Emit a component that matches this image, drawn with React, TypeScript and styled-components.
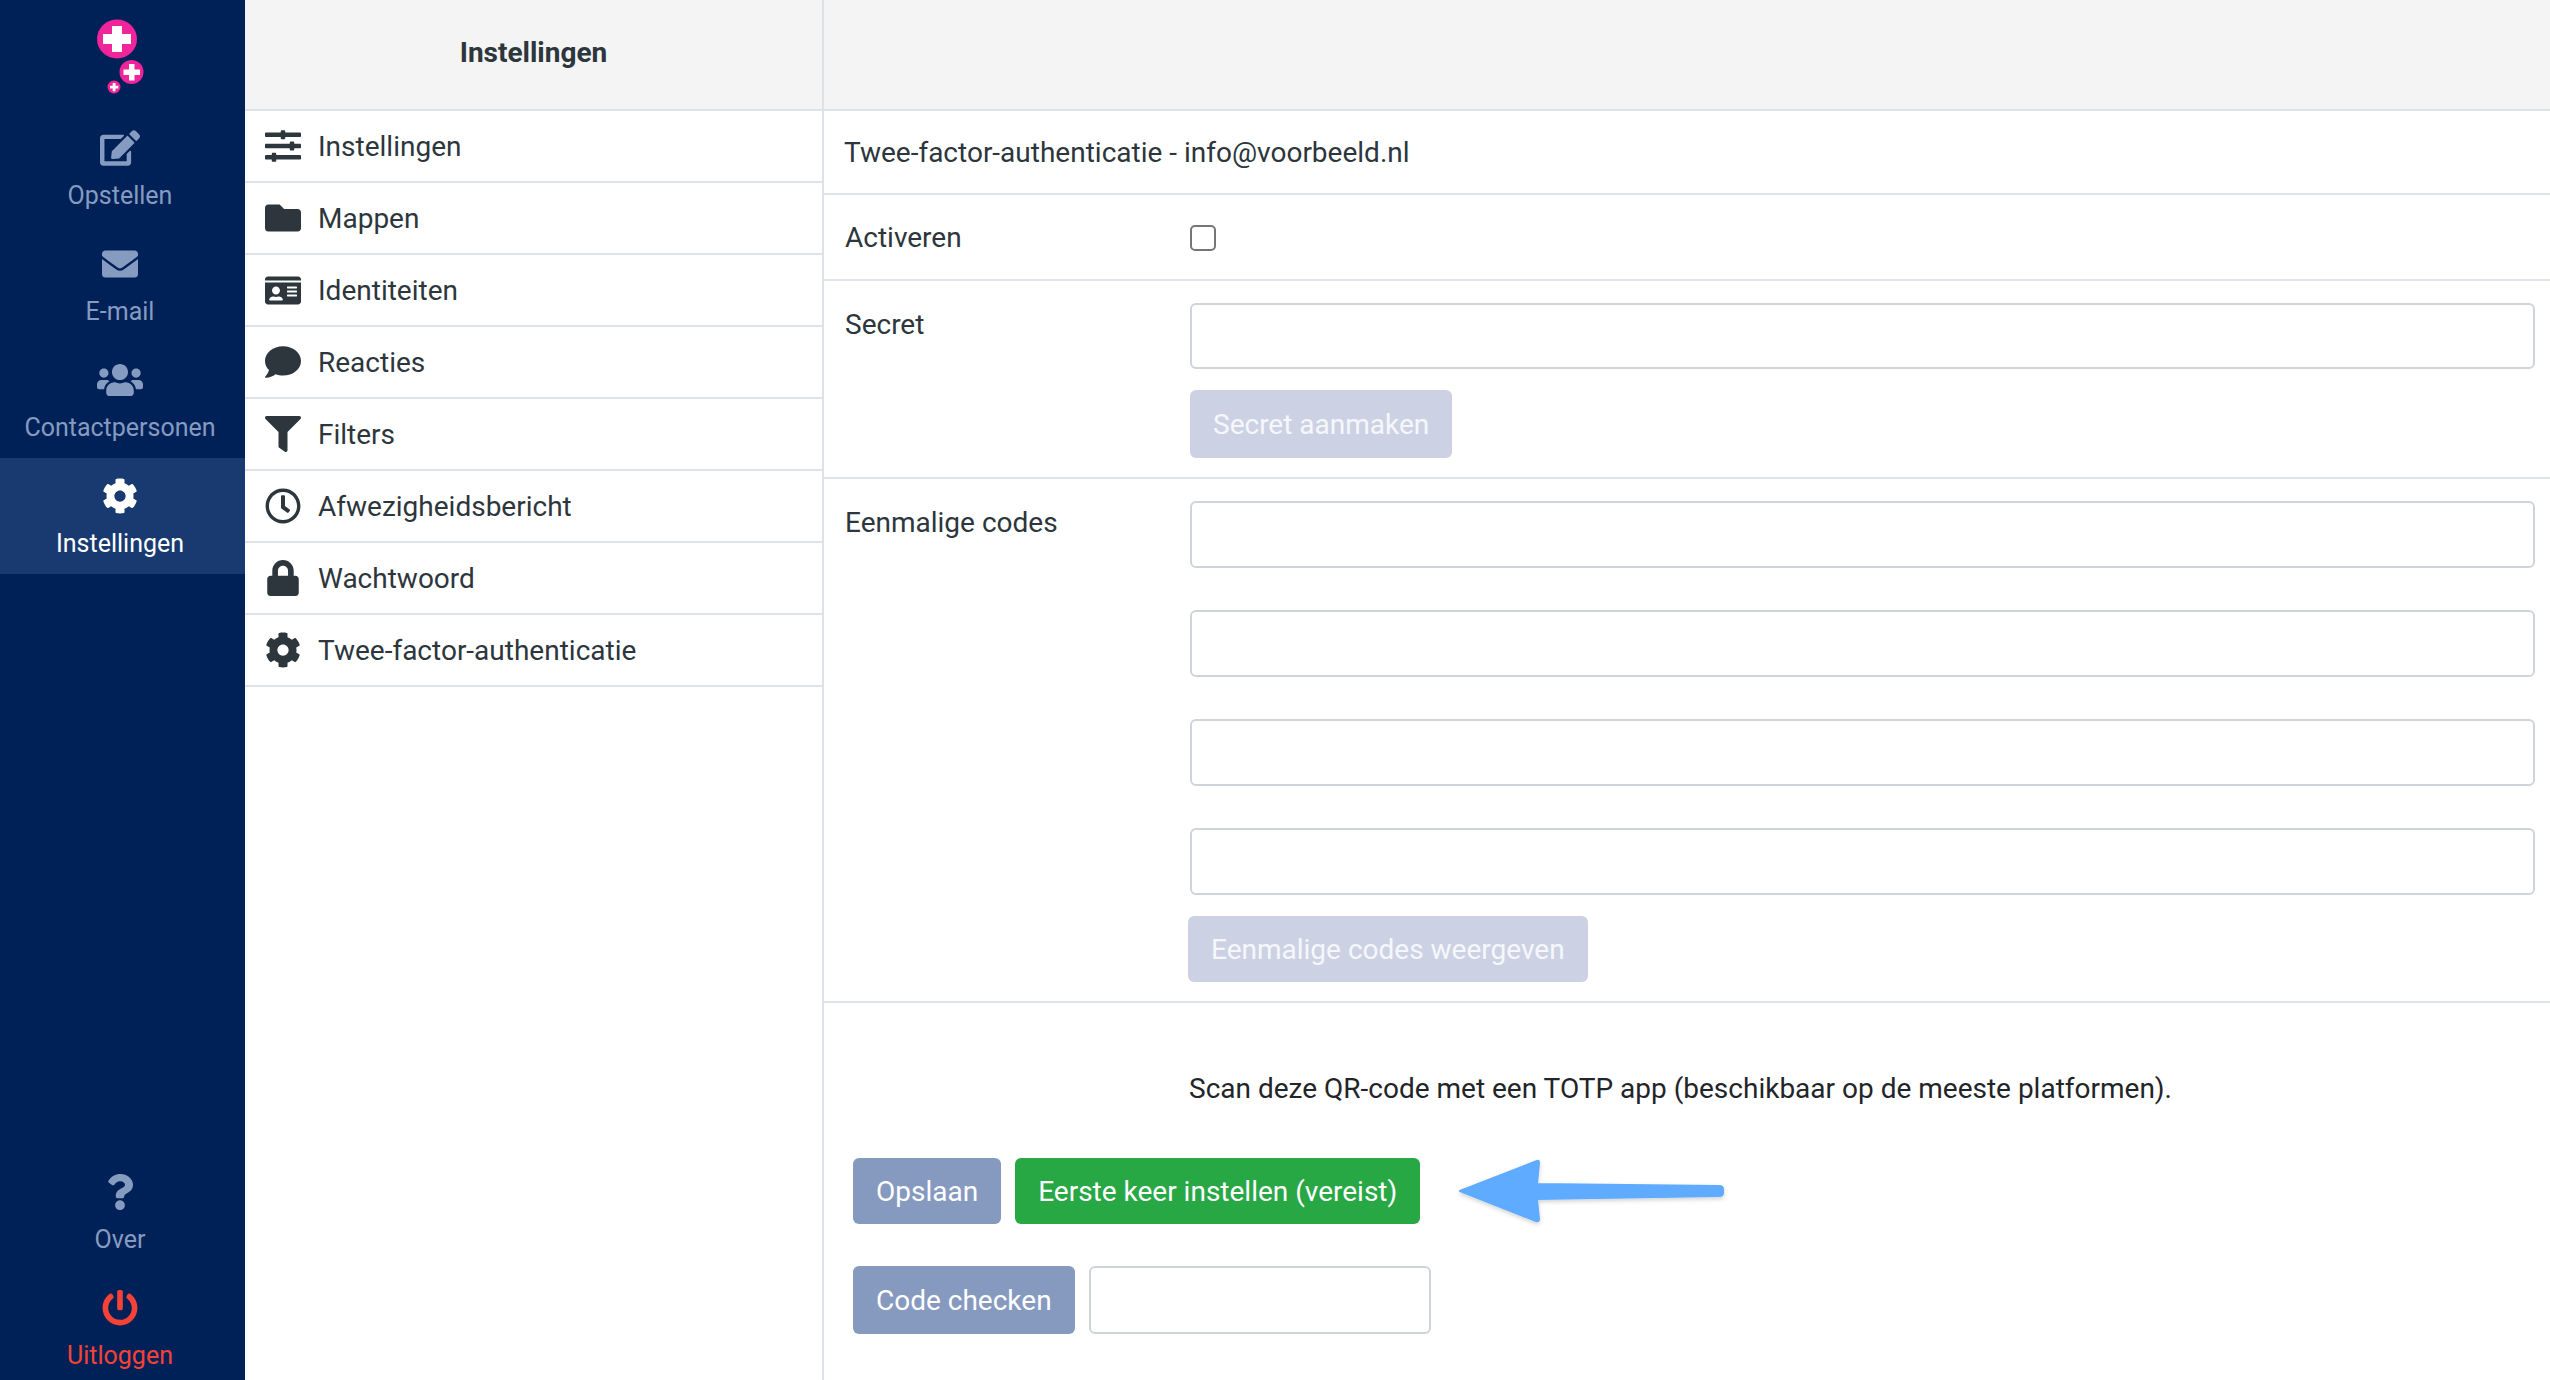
import React from "react";
import styled, { createGlobalStyle } from "styled-components";
import {
  FaCog,
  FaComment,
  FaEdit,
  FaEnvelope,
  FaFilter,
  FaFolder,
  FaIdCard,
  FaLock,
  FaPowerOff,
  FaQuestion,
  FaRegClock,
  FaSlidersH,
  FaUsers,
} from "react-icons/fa";

const GlobalStyle = createGlobalStyle`
  * {
    box-sizing: border-box;
  }
  html, body {
    margin: 0;
    padding: 0;
    background: #fff;
    font-family: Roboto, "Liberation Sans", sans-serif;
    font-size: 26px;
    color: #2c363c;
  }
`;

const Page = styled.div`
  display: grid;
  grid-template-columns: 245px 579px 1fr;
  height: 1380px;
  overflow: hidden;
`;

const Sidebar = styled.nav`
  display: flex;
  flex-direction: column;
  background: #002157;
`;

const LogoWrap = styled.div`
  height: 110px;
  padding: 19px 0 0 97px;
`;

const NavItem = styled.div<{ $active?: boolean; $danger?: boolean }>`
  height: 116px;
  display: flex;
  flex-direction: column;
  align-items: center;
  padding: 20px 5px 0 0;
  font-size: 25px;
  line-height: 38px;
  background: ${(p) => (p.$active ? "#193a70" : "transparent")};
  color: ${(p) => (p.$active ? "#fff" : p.$danger ? "#f44336" : "#869bc0")};
`;

const NavIcon = styled.div<{ $size?: number }>`
  height: 36px;
  margin-bottom: 11px;
  font-size: ${(p) => p.$size || 36}px;
  line-height: 36px;
  display: flex;
  align-items: center;
  justify-content: center;
`;

const BottomNav = styled.div`
  margin-top: auto;

  ${NavItem} {
    padding-top: 26px;
  }
`;

const SubPanel = styled.aside`
  display: flex;
  flex-direction: column;
  border-right: 2px solid #dde2e6;
`;

const PanelHeader = styled.div`
  height: 111px;
  flex: none;
  background: #f4f4f4;
  border-bottom: 2px solid #dde2e6;
  display: flex;
  align-items: center;
  justify-content: center;
  padding-bottom: 4px;
  font-size: 28px;
  font-weight: 700;
`;

const MenuRow = styled.div`
  height: 72px;
  display: flex;
  align-items: center;
  padding-left: 20px;
  border-bottom: 2px solid #dfe3e7;
  font-size: 28px;
`;

const MenuIcon = styled.div<{ $size?: number }>`
  width: 36px;
  margin-right: 17px;
  display: flex;
  justify-content: center;
  font-size: ${(p) => p.$size || 36}px;
`;

const Main = styled.main`
  display: flex;
  flex-direction: column;
`;

const TitleRow = styled.div`
  height: 84px;
  display: flex;
  align-items: center;
  padding-left: 20px;
  border-bottom: 2px solid #dfe3e7;
  font-size: 28px;
`;

const CheckRow = styled.div`
  display: grid;
  grid-template-columns: 345px 1fr;
  height: 86px;
  align-items: center;
  padding: 2px 15px 0 21px;
  border-bottom: 2px solid #dfe3e7;
  font-size: 28px;
`;

const FormRow = styled.div`
  display: grid;
  grid-template-columns: 345px 1fr;
  padding: 22px 15px 19px 21px;
  align-items: start;
  border-bottom: 2px solid #dfe3e7;
  font-size: 28px;
`;

const Label = styled.div`
  line-height: 44px;
`;

const Fields = styled.div<{ $gap: number }>`
  display: flex;
  flex-direction: column;
  align-items: flex-start;
  gap: ${(p) => p.$gap}px;
`;

const TextInput = styled.input<{ $width?: number; $height?: number }>`
  display: block;
  width: ${(p) => (p.$width ? `${p.$width}px` : "100%")};
  height: ${(p) => p.$height || 67}px;
  padding: 0 20px;
  border: 2px solid #ced4da;
  border-radius: 6px;
  background: #fff;
  font: inherit;
`;

const CheckBox = styled.input`
  appearance: none;
  display: block;
  width: 26px;
  height: 26px;
  margin: 0;
  background: #fff;
  border: 2px solid #767676;
  border-radius: 5px;
`;

const Button = styled.button<{ $kind: "primary" | "success" | "disabled"; $height?: number }>`
  height: ${(p) => p.$height || 66}px;
  padding: 0 23px;
  border: 0;
  border-radius: 6px;
  font: inherit;
  font-size: 28px;
  color: ${(p) => (p.$kind === "disabled" ? "#f6f7fb" : "#fff")};
  background: ${(p) =>
    p.$kind === "success" ? "#28a745" : p.$kind === "disabled" ? "#ccd2e4" : "#869abf"};
  white-space: nowrap;
`;

const CodesButton = styled(Button)`
  margin: -21px 0 0 -2px;
`;

const Footer = styled.div`
  display: flex;
  flex-direction: column;
  padding: 64px 0 0 29px;
  font-size: 28px;
`;

const ScanText = styled.div`
  line-height: 44px;
  margin: 0 0 47px 336px;
  color: #1f2529;
`;

const ActionRow = styled.div<{ $mb?: number }>`
  display: flex;
  align-items: center;
  gap: 14px;
  margin-bottom: ${(p) => p.$mb || 0}px;
`;

const ArrowSvg = styled.svg`
  margin-left: 23px;
  overflow: visible;
`;

const Logo = () => (
  <svg width="60" height="80" viewBox="0 0 60 80">
    <g fill="#f0249b">
      <ellipse cx="20" cy="20" rx="20" ry="19.5" />
      <circle cx="34.5" cy="53" r="12" />
      <circle cx="17" cy="68" r="6.5" />
    </g>
    <g fill="#fff">
      <path d="M15 7h10v8h9v10h-9v8H15v-8H6V15h9z" />
      <path d="M32 45h5.500v5.500H43V56h-5.500v5.500H32V56h-5.500v-5.500H32z" />
      <path d="M15.700 64h2.800v2.700h2.800v2.700h-2.800v2.800h-2.800v-2.800H13v-2.700h2.700z" />
    </g>
  </svg>
);

const menu = [
  { label: "Instellingen", icon: <FaSlidersH /> },
  { label: "Mappen", icon: <FaFolder /> },
  { label: "Identiteiten", icon: <FaIdCard />, size: 41 },
  { label: "Reacties", icon: <FaComment /> },
  { label: "Filters", icon: <FaFilter /> },
  { label: "Afwezigheidsbericht", icon: <FaRegClock /> },
  { label: "Wachtwoord", icon: <FaLock /> },
  { label: "Twee-factor-authenticatie", icon: <FaCog /> },
];

export default function App() {
  return (
    <Page>
      <GlobalStyle />
      <Sidebar>
        <LogoWrap>
          <Logo />
        </LogoWrap>
        <NavItem>
          <NavIcon $size={40}><FaEdit /></NavIcon>
          Opstellen
        </NavItem>
        <NavItem>
          <NavIcon><FaEnvelope /></NavIcon>
          E-mail
        </NavItem>
        <NavItem>
          <NavIcon $size={46}><FaUsers /></NavIcon>
          Contactpersonen
        </NavItem>
        <NavItem $active>
          <NavIcon><FaCog /></NavIcon>
          Instellingen
        </NavItem>
        <BottomNav>
          <NavItem>
            <NavIcon><FaQuestion /></NavIcon>
            Over
          </NavItem>
          <NavItem $danger>
            <NavIcon><FaPowerOff /></NavIcon>
            Uitloggen
          </NavItem>
        </BottomNav>
      </Sidebar>

      <SubPanel>
        <PanelHeader>Instellingen</PanelHeader>
        {menu.map((item) => (
          <MenuRow key={item.label}>
            <MenuIcon $size={item.size}>{item.icon}</MenuIcon>
            {item.label}
          </MenuRow>
        ))}
      </SubPanel>

      <Main>
        <PanelHeader />
        <TitleRow>Twee-factor-authenticatie - info@voorbeeld.nl</TitleRow>
        <CheckRow>
          <Label>Activeren</Label>
          <CheckBox type="checkbox" />
        </CheckRow>
        <FormRow>
          <Label>Secret</Label>
          <Fields $gap={21}>
            <TextInput $height={66} />
            <Button $kind="disabled" $height={68}>Secret aanmaken</Button>
          </Fields>
        </FormRow>
        <FormRow>
          <Label>Eenmalige codes</Label>
          <Fields $gap={42}>
            <TextInput />
            <TextInput />
            <TextInput />
            <TextInput />
            <CodesButton $kind="disabled">Eenmalige codes weergeven</CodesButton>
          </Fields>
        </FormRow>
        <Footer>
          <ScanText>Scan deze QR-code met een TOTP app (beschikbaar op de meeste platformen).</ScanText>
          <ActionRow $mb={42}>
            <Button $kind="primary">Opslaan</Button>
            <Button $kind="success">Eerste keer instellen (vereist)</Button>
            <ArrowSvg width="266" height="64" viewBox="0 0 266 64">
              <defs>
                <filter id="arrowShadow" x="-5%" y="-10%" width="110%" height="130%">
                  <feDropShadow dx="0" dy="2" stdDeviation="2" floodColor="#000" floodOpacity="0.18" />
                </filter>
              </defs>
              <path
                d="M3 32 L80 2 Q82 1 82 4 L80 25 L262 27 Q266 27 266 30 L266 34 Q266 37 262 37 L80 40 L82 60 Q82 63 79 62 Z"
                fill="#5fabff"
                stroke="#5fabff"
                strokeWidth="2"
                strokeLinejoin="round"
                filter="url(#arrowShadow)"
              />
            </ArrowSvg>
          </ActionRow>
          <ActionRow>
            <Button $kind="primary" $height={68}>Code checken</Button>
            <TextInput $width={342} $height={68} />
          </ActionRow>
        </Footer>
      </Main>
    </Page>
  );
}
